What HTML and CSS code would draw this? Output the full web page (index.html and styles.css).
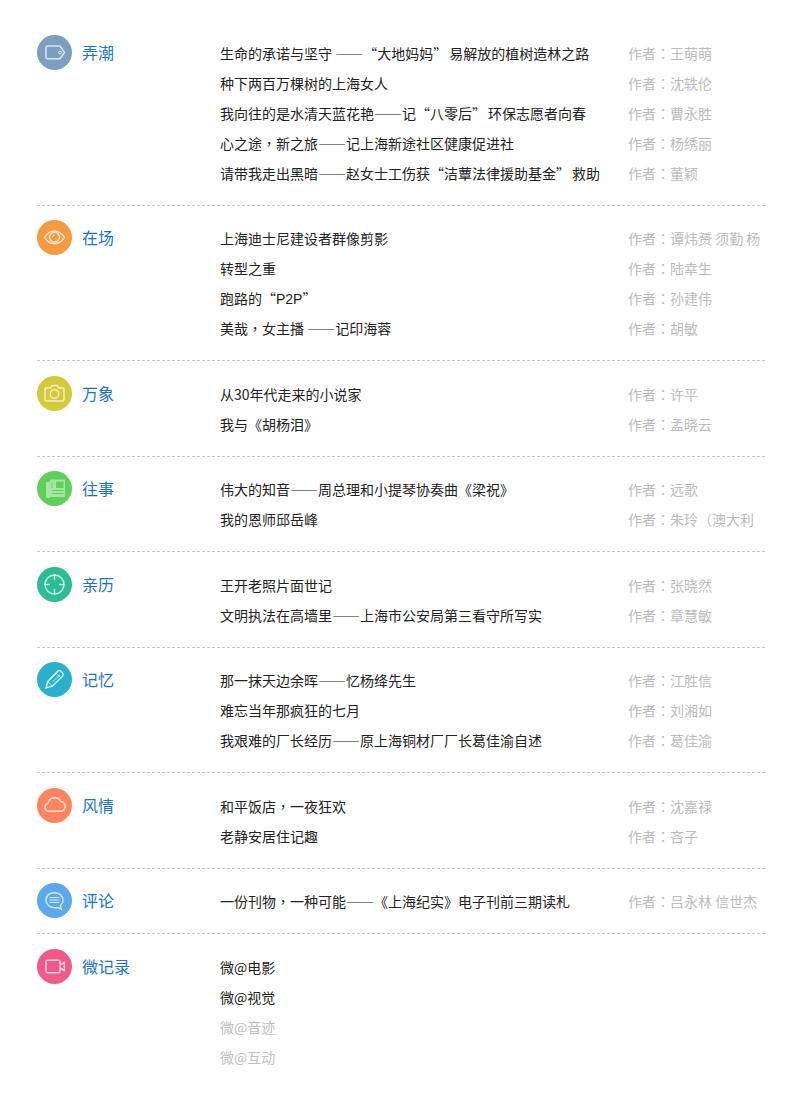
FILE: index.html
```html
<!DOCTYPE html>
<html lang="zh-CN">
<head>
<meta charset="utf-8">
<title>目录</title>
<link rel="stylesheet" href="styles.css">
</head>
<body>
<main class="toc">
  <section class="group">
    <header class="head">
      <span class="badge c1"><svg viewBox="0 0 35 35" class="ico"><path d="M10.500 11h12.500l4.500 6.400-4.500 6.400H10.500a1.500 1.500 0 0 1-1.500-1.500V12.500a1.500 1.500 0 0 1 1.500-1.500z"/><circle class="thin" cx="23" cy="17.500" r="1.400"/></svg></span>
      <h2 class="name">弄潮</h2>
    </header>
    <ul class="rows">
      <li class="row"><a class="t">生命的承诺与坚守 ——“大地妈妈<span class="cq">”</span>易解放的植树造林之路</a><span class="by">作者<i class="p">：</i>王萌萌</span></li>
      <li class="row"><a class="t">种下两百万棵树的上海女人</a><span class="by">作者<i class="p">：</i>沈轶伦</span></li>
      <li class="row"><a class="t">我向往的是水清天蓝花艳——记“八零后<span class="cq">”</span>环保志愿者向春</a><span class="by">作者<i class="p">：</i>曹永胜</span></li>
      <li class="row"><a class="t">心之途<i class="p">，</i>新之旅——记上海新途社区健康促进社</a><span class="by">作者<i class="p">：</i>杨绣丽</span></li>
      <li class="row"><a class="t">请带我走出黑暗——赵女士工伤获“洁蕈法律援助基金<span class="cq">”</span>救助</a><span class="by">作者<i class="p">：</i>董颖</span></li>
    </ul>
  </section>
  <section class="group">
    <header class="head">
      <span class="badge c2"><svg viewBox="0 0 35 35" class="ico"><path d="M7.500 17.300c3-4.400 6.300-6.300 10-6.300s7 1.900 10 6.300c-3 4.400-6.300 6.400-10 6.400s-7-2-10-6.400z"/><circle cx="17.500" cy="17.300" r="5"/><path class="thin" d="M15.500 17a2.200 2.200 0 0 1 2.200-2"/></svg></span>
      <h2 class="name">在场</h2>
    </header>
    <ul class="rows">
      <li class="row"><a class="t">上海迪士尼建设者群像剪影</a><span class="by">作者<i class="p">：</i>谭炜赟 须勤 杨</span></li>
      <li class="row"><a class="t">转型之重</a><span class="by">作者<i class="p">：</i>陆幸生</span></li>
      <li class="row"><a class="t">跑路的“<span class="lat">P2P</span>”</a><span class="by">作者<i class="p">：</i>孙建伟</span></li>
      <li class="row"><a class="t">美哉<i class="p">，</i>女主播 ——记印海蓉</a><span class="by">作者<i class="p">：</i>胡敏</span></li>
    </ul>
  </section>
  <section class="group">
    <header class="head">
      <span class="badge c3"><svg viewBox="0 0 35 35" class="ico"><path d="M9.500 12h3.800l1.700-2.500h5l1.700 2.500h3.800a1.500 1.500 0 0 1 1.500 1.500v10a1.500 1.500 0 0 1-1.500 1.500h-16A1.500 1.500 0 0 1 8 23.500v-10A1.500 1.500 0 0 1 9.500 12z"/><circle cx="17.500" cy="18" r="4.300"/></svg></span>
      <h2 class="name">万象</h2>
    </header>
    <ul class="rows">
      <li class="row"><a class="t">从30年代走来的小说家</a><span class="by">作者<i class="p">：</i>许平</span></li>
      <li class="row"><a class="t">我与《胡杨泪》</a><span class="by">作者<i class="p">：</i>孟晓云</span></li>
    </ul>
  </section>
  <section class="group">
    <header class="head">
      <span class="badge c4"><svg viewBox="0 0 35 35" class="ico"><path class="fill" d="M13 8.500h14a1 1 0 0 1 1 1V25a1 1 0 0 1-1 1H13z"/><path class="fill" d="M10 11h3v16h-3a1 1 0 0 1-1-1V12a1 1 0 0 1 1-1z"/><path class="block" d="M19 10.500h7.500v6.500H19z"/><path class="cut" d="M15 19.500h11.500M15 22.500h11.500M15 12v5"/></svg></span>
      <h2 class="name">往事</h2>
    </header>
    <ul class="rows">
      <li class="row"><a class="t">伟大的知音——周总理和小提琴协奏曲《梁祝》</a><span class="by">作者<i class="p">：</i>远歌</span></li>
      <li class="row"><a class="t">我的恩师邱岳峰</a><span class="by">作者<i class="p">：</i>朱玲（澳大利</span></li>
    </ul>
  </section>
  <section class="group">
    <header class="head">
      <span class="badge c5"><svg viewBox="0 0 35 35" class="ico"><circle cx="17.500" cy="17.500" r="9.500"/><path d="M17.500 7.500v5.500M17.500 22v5.500M7.500 17.500H13M22 17.500h5.500"/></svg></span>
      <h2 class="name">亲历</h2>
    </header>
    <ul class="rows">
      <li class="row"><a class="t">王开老照片面世记</a><span class="by">作者<i class="p">：</i>张晓然</span></li>
      <li class="row"><a class="t">文明执法在高墙里——上海市公安局第三看守所写实</a><span class="by">作者<i class="p">：</i>章慧敏</span></li>
    </ul>
  </section>
  <section class="group">
    <header class="head">
      <span class="badge c6"><svg viewBox="0 0 35 35" class="ico"><path d="M20.500 9.300a2.500 2.500 0 0 1 3.400 0l1.600 1.600a2.500 2.500 0 0 1 0 3.400L15.500 24 9 26l1.800-6.500z"/><path class="thin" d="M18.800 11l5.400 5.400M10.800 19.500l4.700 4.500M13.300 17.300l7.600-7.200M15.700 19.700l7.500-7.200"/></svg></span>
      <h2 class="name">记忆</h2>
    </header>
    <ul class="rows">
      <li class="row"><a class="t">那一抹天边余晖——忆杨绛先生</a><span class="by">作者<i class="p">：</i>江胜信</span></li>
      <li class="row"><a class="t">难忘当年那疯狂的七月</a><span class="by">作者<i class="p">：</i>刘湘如</span></li>
      <li class="row"><a class="t">我艰难的厂长经历——原上海铜材厂厂长葛佳渝自述</a><span class="by">作者<i class="p">：</i>葛佳渝</span></li>
    </ul>
  </section>
  <section class="group">
    <header class="head">
      <span class="badge c7"><svg viewBox="0 0 35 35" class="ico"><path d="M12 23.300a4 4 0 0 1-.9-7.900 6.800 6.800 0 0 1 12.800-1.900 5 5 0 0 1 .3 9.800z"/></svg></span>
      <h2 class="name">风情</h2>
    </header>
    <ul class="rows">
      <li class="row"><a class="t">和平饭店<i class="p">，</i>一夜狂欢</a><span class="by">作者<i class="p">：</i>沈嘉禄</span></li>
      <li class="row"><a class="t">老静安居住记趣</a><span class="by">作者<i class="p">：</i>吝子</span></li>
    </ul>
  </section>
  <section class="group">
    <header class="head">
      <span class="badge c8"><svg viewBox="0 0 35 35" class="ico"><path d="M17.500 9.700c4.700 0 8.500 3.200 8.500 7.300 0 2.300-1 4.200-2.500 5.500l.7 3.800-4-1.900a10 10 0 0 1-2.700.3c-4.700 0-8.500-3.200-8.500-7.700s3.800-7.300 8.500-7.300z"/><path class="thin" d="M12.500 14.500h10M12.500 17h10M12.500 19.500h10"/></svg></span>
      <h2 class="name">评论</h2>
    </header>
    <ul class="rows">
      <li class="row"><a class="t">一份刊物<i class="p">，</i>一种可能——《上海纪实》电子刊前三期读札</a><span class="by">作者<i class="p">：</i>吕永林 信世杰</span></li>
    </ul>
  </section>
  <section class="group last">
    <header class="head">
      <span class="badge c9"><svg viewBox="0 0 35 35" class="ico"><rect x="9" y="11.300" width="14" height="12.400" rx="1.500"/><path d="M23 16l4.300-2.500v8L23 19"/></svg></span>
      <h2 class="name">微记录</h2>
    </header>
    <ul class="rows">
      <li class="row"><a class="t">微@电影</a></li>
      <li class="row"><a class="t">微@视觉</a></li>
      <li class="row"><a class="t off">微@音迹</a></li>
      <li class="row"><a class="t off">微@互动</a></li>
    </ul>
  </section>
</main>
</body>
</html>
```
FILE: styles.css
```css
* { box-sizing: border-box; }
html, body { margin: 0; padding: 0; background: #fff; }
body {
  font-family: "Noto Sans CJK SC", "Noto Sans", sans-serif;
  font-size: 14px;
  color: #222;
  text-spacing-trim: space-all;
}
.toc { padding: 20.4px 46px 0 37px; }
.group {
  display: flex;
  padding: 14.5px 0 15px;
  border-bottom: 1px dashed #c8c8c8;
}
.group.last { border-bottom: 0; }
.head { display: flex; flex: 0 0 183px; align-items: flex-start; gap: 10px; }
.badge { flex: 0 0 35px; width: 35px; height: 35px; border-radius: 50%; display: block; }
.ico { display: block; width: 35px; height: 35px; fill: none; stroke: rgba(255,255,255,.72); stroke-width: 1.500; }
.ico .thin { stroke-width: 1; }
.ico .fill { fill: rgba(255,255,255,.45); stroke: none; }
.ico .block { fill: #5ecf58; stroke: none; }
.ico .cut { stroke: #5ecf58; stroke-width: 1; }
.c1 { background: #7a9fc1; }
.c2 { background: #f59a40; }
.c3 { background: #d4c93b; }
.c4 { background: #5ecf58; }
.c5 { background: #2dbd95; }
.c6 { background: #29b0ca; }
.c7 { background: #ff8560; }
.c8 { background: #5ba8ef; }
.c9 { background: #ef5a88; }
.name { margin: 0; font-size: 16px; font-weight: 400; line-height: 35px; color: #1b74c4; white-space: nowrap; }
.rows { list-style: none; margin: 0; padding: 3px 0 2px; flex: 1 1 0; min-width: 0; }
.row { display: flex; height: 30px; line-height: 30px; }
.t { flex: 0 0 408px; white-space: nowrap; overflow: hidden; color: #222; }
.t.off { color: #c0c0c0; }
.by { flex: 0 0 137px; white-space: nowrap; overflow: hidden; color: #bcbcbc; }
.p { font-style: normal; font-family: "Noto Sans CJK TC", sans-serif; font-feature-settings: "locl" 0; }
.lat { font-family: "Liberation Sans", sans-serif; }
.cq { margin-right: 2px; }
```
